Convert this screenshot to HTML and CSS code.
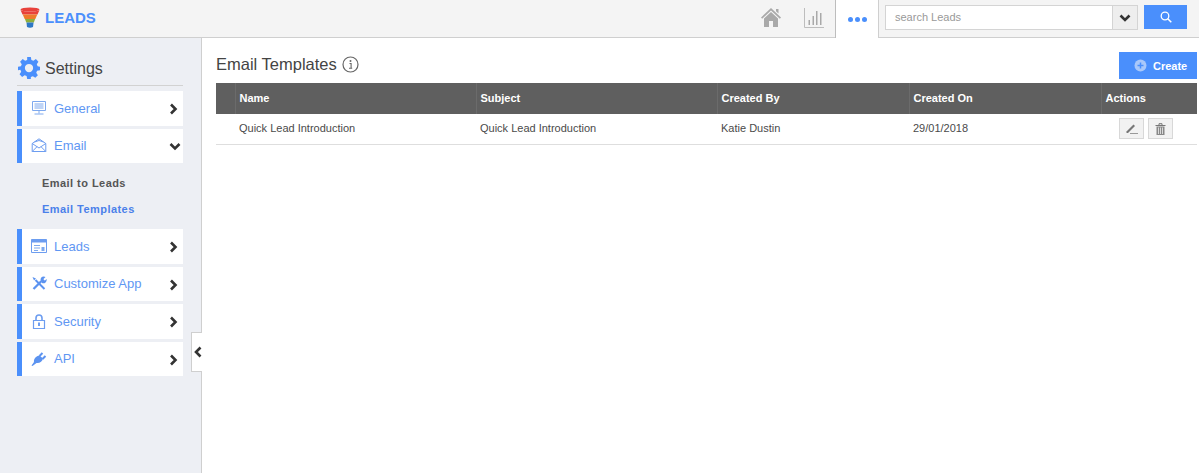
FILE: index.html
```html
<!DOCTYPE html>
<html lang="en">
<head>
<meta charset="utf-8">
<title>Email Templates</title>
<link rel="stylesheet" href="styles.css">
</head>
<body>
<header class="topbar">
  <div class="brand">
    <svg class="funnel" width="20" height="21" viewBox="0 0 20 21">
      <ellipse cx="10" cy="2.5" rx="9.5" ry="2" fill="#e8413a"/>
      <path d="M.5 3 C4 5 16 5 19.500 3 L17.500 7.500 H2.500Z" fill="#e8413a"/>
      <path d="M2.700 7.500H17.300L15.300 12H4.700Z" fill="#ee7a2b"/>
      <path d="M4.900 12H15.100L13.800 15.500H6.300Z" fill="#8fae3c"/>
      <path d="M6.500 15.500H13.600L13 20C11.500 21 8.500 21 7 20Z" fill="#2e78c4"/>
    </svg>
    <span class="brand-name">LEADS</span>
  </div>
  <nav class="topnav">
    <a class="topicon home"><svg width="20" height="19" viewBox="0 0 20 19"><path d="M10 0 L20 9.500 L18.800 10.800 L10 2.600 L1.200 10.800 L0 9.500Z M15 1h2.500v4.500L15 3.200Z" fill="#a9a9a9"/><path d="M10 4 L17 10.500V19H12V13H8V19H3V10.500Z" fill="#a9a9a9"/></svg></a>
    <a class="topicon chart"><svg width="20" height="20" viewBox="0 0 20 20"><path d="M.5 0V19.500H20" fill="none" stroke="#bdbdbd"/><path d="M4.500 12h1.500v5H4.500zM8.500 8h1.500v9H8.500zM12 3h1.500v14H12zM16 5h1.500v12H16z" fill="#a9a9a9"/></svg></a>
    <a class="topicon dots"><span></span><span></span><span></span></a>
  </nav>
  <form class="search">
    <div class="search-field">
      <span class="search-text">search Leads</span>
      <span class="search-drop"><svg width="12" height="8" viewBox="0 0 12 8"><path d="M1.500 1.500L6 6L10.500 1.500" fill="none" stroke="#333" stroke-width="2.600"/></svg></span>
    </div>
    <button class="search-btn" type="button"><svg width="12" height="12" viewBox="0 0 12 12"><circle cx="5" cy="5" r="3.800" fill="none" stroke="#fff" stroke-width="1.300"/><path d="M7.800 7.800L11.300 11.300" stroke="#fff" stroke-width="1.500"/></svg></button>
  </form>
</header>
<div class="layout">
  <aside class="sidebar">
    <h2 class="side-title">
      <svg width="22" height="22" viewBox="0 0 24 24"><path fill="#4a8ffc" fill-rule="evenodd" d="M10 0h4l.6 3.200 2.200.9L19.500 2.300l2.800 2.800-1.800 2.700.9 2.200L24 10.600v3.800l-3.200.6-.9 2.200 1.800 2.700-2.800 2.800-2.700-1.800-2.200.9L14 24h-4l-.6-3.200-2.200-.9-2.700 1.800-2.800-2.800 1.800-2.700-.9-2.200L0 14.400v-3.800l3.200-.6.900-2.200L2.300 5.100l2.800-2.800 2.700 1.800 2.200-.9ZM12 7.500a4.500 4.500 0 1 0 0 9 4.500 4.500 0 0 0 0-9Z"/></svg>
      <span class="side-text">Settings</span>
    </h2>
    <ul class="menu">
      <li class="item">
        <svg class="ico" width="16" height="15" viewBox="0 0 16 15"><path d="M1.500 .5h13v9h-13zM3.500 3h9M3.500 5h9M3.500 7h9M8 9.500v3M3.500 13h9" fill="none" stroke="#7ea9ee" stroke-width="1"/></svg>
        <span class="label">General</span>
        <svg class="chev" width="9" height="12" viewBox="0 0 9 12"><path d="M2 1.500L6.500 6L2 10.500" fill="none" stroke="#333" stroke-width="2.600"/></svg>
      </li>
      <li class="item">
        <svg class="ico" width="15" height="15" viewBox="0 0 15 15"><path d="M.7 5.500L7.500 .8L14.300 5.500V13.500H.7ZM.7 5.500L7.500 10L14.300 5.500M.7 13.500L5.500 8.700M14.300 13.500L9.500 8.700M3 4l4.500-1.500L12 4" fill="none" stroke="#6d9df0" stroke-width="1"/></svg>
        <span class="label">Email</span>
        <svg class="chev down" width="12" height="9" viewBox="0 0 12 9"><path d="M1.500 2L6 6.500L10.500 2" fill="none" stroke="#333" stroke-width="2.600"/></svg>
      </li>
      <li class="sub">
        <a class="sub-link">Email to Leads</a>
        <a class="sub-link active">Email Templates</a>
      </li>
      <li class="item">
        <svg class="ico" width="16" height="14" viewBox="0 0 16 14"><path d="M.5 .5h15v13H.5z" fill="none" stroke="#6d9df0"/><path d="M.5 .5h15v3H.5z" fill="#6d9df0"/><path d="M3 6h6v1H3zM3 8.500h6v1H3zM3 11h4v1H3zM10.500 8h3v4h-3z" fill="#7ea9ee"/></svg>
        <span class="label">Leads</span>
        <svg class="chev" width="9" height="12" viewBox="0 0 9 12"><path d="M2 1.500L6.500 6L2 10.500" fill="none" stroke="#333" stroke-width="2.600"/></svg>
      </li>
      <li class="item">
        <svg class="ico" width="15" height="15" viewBox="0 0 15 15"><path d="M2 13L10 5" stroke="#5c93f0" stroke-width="2.300"/><path d="M13 13L4 4" stroke="#5c93f0" stroke-width="2"/><path d="M1 1L4.500 2.500 2.500 4.500Z" fill="#5c93f0"/><path d="M9 3.500a3.300 3.300 0 0 1 5-2.500L12 3l.5 1 1 .5L15 3a3.300 3.300 0 0 1-4.500 4Z" fill="#5c93f0"/></svg>
        <span class="label">Customize App</span>
        <svg class="chev" width="9" height="12" viewBox="0 0 9 12"><path d="M2 1.500L6.500 6L2 10.500" fill="none" stroke="#333" stroke-width="2.600"/></svg>
      </li>
      <li class="item">
        <svg class="ico" width="15" height="15" viewBox="0 0 15 15"><path d="M4.500 6.500V4a3 3 0 0 1 6 0V6.500" fill="none" stroke="#6d9df0" stroke-width="1.600"/><path d="M2 6.500h11v8H2z" fill="none" stroke="#6d9df0" stroke-width="1.200"/><path d="M6.500 8.500h2v3.500h-2z" fill="#6d9df0"/></svg>
        <span class="label">Security</span>
        <svg class="chev" width="9" height="12" viewBox="0 0 9 12"><path d="M2 1.500L6.500 6L2 10.500" fill="none" stroke="#333" stroke-width="2.600"/></svg>
      </li>
      <li class="item">
        <svg class="ico" width="15" height="14" viewBox="0 0 15 14"><path d="M0 13.500L2.500 10C2 7 4.500 4 8 3.500L11.500 6.500C11 9.500 8 11.500 5 11L1 14Z" fill="#5c93f0"/><path d="M8 4L11 1M11 7L14 4" stroke="#5c93f0" stroke-width="2"/></svg>
        <span class="label">API</span>
        <svg class="chev" width="9" height="12" viewBox="0 0 9 12"><path d="M2 1.500L6.500 6L2 10.500" fill="none" stroke="#333" stroke-width="2.600"/></svg>
      </li>
    </ul>
    <button class="collapse" type="button"><svg width="8" height="12" viewBox="0 0 8 12"><path d="M6.500 1.500L2 6L6.500 10.500" fill="none" stroke="#333" stroke-width="2.600"/></svg></button>
  </aside>
  <main class="content">
    <div class="head">
      <h1 class="title">Email Templates</h1>
      <svg class="info" width="17" height="17" viewBox="0 0 17 17"><circle cx="8.500" cy="8.500" r="7.500" fill="none" stroke="#666" stroke-width="1.200"/><path d="M7.500 7.500h1.600v4.500M7 12.300h3.200" fill="none" stroke="#666" stroke-width="1.100"/><circle cx="8.500" cy="5" r="1" fill="#666"/></svg>
      <button class="create" type="button">
        <svg width="13" height="13" viewBox="0 0 13 13"><circle cx="6.500" cy="6.500" r="6" fill="#a9c8fa"/><path d="M6.500 3.500v6M3.500 6.500h6" stroke="#4a8ffc" stroke-width="1.500"/></svg>
        <span>Create</span>
      </button>
    </div>
    <table class="grid">
      <thead>
        <tr>
          <th class="c0"></th>
          <th class="c1">Name</th>
          <th class="c2">Subject</th>
          <th class="c3">Created By</th>
          <th class="c4">Created On</th>
          <th class="c5">Actions</th>
        </tr>
      </thead>
      <tbody>
        <tr>
          <td></td>
          <td>Quick Lead Introduction</td>
          <td>Quick Lead Introduction</td>
          <td>Katie Dustin</td>
          <td>29/01/2018</td>
          <td>
            <div class="actions">
              <span class="act"><svg width="13" height="11" viewBox="0 0 13 11"><path d="M1.500 8.500L8.500 1.500L10 3L3 10H1.500Z" fill="#777"/><path d="M5 10.500H13" stroke="#999"/></svg></span>
              <span class="act"><svg width="11" height="12" viewBox="0 0 11 12"><path d="M.5 2.500h10M4 2V.7h3V2" fill="none" stroke="#777"/><path d="M1.500 3.500h8V12h-8z" fill="#888"/><path d="M3.500 4.500V11M5.500 4.500V11M7.500 4.500V11" stroke="#eee" stroke-width=".8"/></svg></span>
            </div>
          </td>
        </tr>
      </tbody>
    </table>
  </main>
</div>
</body>
</html>
```
FILE: styles.css
```css
* { box-sizing: border-box; }
html, body { margin: 0; height: 100%; }
body {
  font-family: "Liberation Sans", Arial, sans-serif;
  background: #fff;
  color: #444;
  overflow: hidden;
}
.topbar {
  height: 38px;
  display: flex;
  align-items: stretch;
  background: #f4f4f4;
  border-bottom: 1px solid #cfcfcf;
}
.brand {
  display: flex;
  align-items: center;
  gap: 5px;
  padding: 0 0 2px 20px;
  margin-right: auto;
}
.funnel { margin-bottom: 1px; }
.brand-name {
  font-size: 15px;
  font-weight: 700;
  color: #4a8ffc;
}
.topnav { display: flex; align-items: stretch; }
.topicon {
  display: flex;
  align-items: center;
  justify-content: center;
  gap: 2px;
}
.home { width: 20px; margin-right: 23px; padding-bottom: 2px; }
.chart { width: 20px; margin-right: 11px; padding-bottom: 2px; }
.dots {
  width: 44px;
  background: #fff;
  border-left: 1px solid #bdbdbd;
  border-right: 1px solid #cfcfcf;
  height: 38px;
  padding-top: 1px;
}
.dots span {
  width: 5px;
  height: 5px;
  border-radius: 50%;
  background: #4a8ffc;
}
.search {
  display: flex;
  align-items: flex-start;
  padding: 5px 12px 0 6px;
  gap: 6px;
}
.search-field {
  width: 253px;
  height: 25px;
  display: flex;
  justify-content: space-between;
  align-items: stretch;
  background: #fff;
  border: 1px solid #d4d4d4;
}
.search-text {
  font-size: 11px;
  line-height: 22px;
  color: #999;
  padding-left: 9px;
}
.search-drop {
  width: 25px;
  background: #eee;
  border-left: 1px solid #d4d4d4;
  display: flex;
  align-items: center;
  justify-content: center;
}
.search-btn {
  width: 43px;
  height: 24px;
  border: 0;
  padding: 0;
  background: #4a8ffc;
  display: flex;
  align-items: center;
  justify-content: center;
}
.layout { display: flex; height: 435px; }
.sidebar {
  position: relative;
  width: 202px;
  flex: none;
  background: #edeff4;
  border-right: 1px solid #cfcfcf;
  padding: 17px 18px 0 17px;
}
.side-title {
  display: flex;
  align-items: center;
  gap: 5px;
  margin: 0 0 5px;
  padding: 0 0 4px 1px;
  height: 31px;
  border-bottom: 1px solid #d2d2d2;
  font-size: 16px;
  font-weight: 400;
  color: #444;
}
.side-text { padding-top: 2px; }
.menu { list-style: none; margin: 0; padding: 0; }
.item {
  display: flex;
  align-items: center;
  height: 34.500px;
  margin-bottom: 3px;
  padding: 0 5px 0 9px;
  background: #fff;
  border-left: 5px solid #4a8ffc;
}
.ico { flex: none; width: 16px; margin-right: 7px; }
.label {
  flex: 1;
  font-size: 13px;
  color: #5f97f3;
}
.chev { flex: none; margin-top: 2px; }
.down { margin-right: -3px; }
.sub {
  height: 63px;
  padding: 10px 0 0 25px;
  display: flex;
  flex-direction: column;
  gap: 11.500px;
}
.sub-link {
  font-size: 11px;
  line-height: 14px;
  font-weight: 700;
  letter-spacing: .45px;
  color: #555;
}
.sub-link.active { color: #4a80ea; }
.collapse {
  position: absolute;
  top: 294px;
  right: -1px;
  width: 11px;
  height: 40px;
  padding: 0 0 0 2px;
  background: #fff;
  border: 1px solid #cfcfcf;
  border-right: 0;
  display: flex;
  align-items: center;
  justify-content: center;
}
.content { flex: 1; padding: 14px 2px 0 14px; min-width: 0; }
.head {
  display: flex;
  align-items: center;
  height: 27px;
  margin-bottom: 4px;
}
.title {
  margin: 0 5px 2px 0;
  font-size: 16.500px;
  font-weight: 400;
  color: #444;
}
.info { flex: none; margin-bottom: 2px; }
.create {
  margin-left: auto;
  width: 78px;
  height: 27px;
  border: 0;
  padding: 0 0 0 15px;
  background: #4a8ffc;
  display: flex;
  align-items: center;
  justify-content: flex-start;
  gap: 6px;
  font-family: "Liberation Sans", Arial, sans-serif;
  font-size: 11px;
  font-weight: 700;
  color: #fff;
}
.grid {
  width: 981px;
  border-collapse: collapse;
  table-layout: fixed;
  font-size: 11px;
}
.grid th {
  height: 31px;
  background: #5f5f5f;
  color: #fff;
  font-weight: 700;
  text-align: left;
  padding: 0 0 2px 4px;
  border-left: 1px solid #6b6b6b;
}
.grid th:first-child { border-left: 0; }
.grid td {
  height: 30px;
  padding: 0 0 2px 4px;
  color: #4a4a4a;
  border-bottom: 1px solid #dedede;
}
.c0 { width: 19px; }
.c1 { width: 241px; }
.c2 { width: 241px; }
.c3 { width: 192px; }
.c4 { width: 192px; }
.actions { display: flex; gap: 4px; padding: 2px 0 0 14px; }
.act {
  width: 25px;
  height: 21px;
  display: flex;
  align-items: center;
  justify-content: center;
  background: #f2f2f2;
  border: 1px solid #d8d8d8;
}
```
